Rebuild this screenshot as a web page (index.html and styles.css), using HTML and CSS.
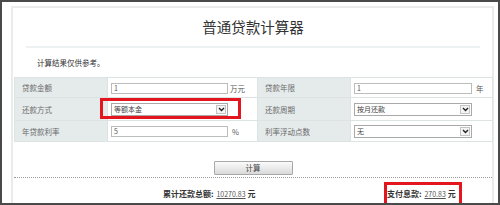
FILE: index.html
```html
<!DOCTYPE html>
<html lang="zh-CN">
<head>
<meta charset="utf-8">
<title>普通贷款计算器</title>
<link rel="stylesheet" href="styles.css">
</head>
<body>
<div class="frame">
  <div class="card">
    <h1 class="title">普通贷款计算器</h1>
    <div class="sep"></div>
    <p class="note">计算结果仅供参考。</p>
    <table class="form">
      <colgroup><col class="c-lab"><col class="c-v1"><col class="c-lab"><col class="c-v2"></colgroup>
      <tr class="r1">
        <th>贷款金额</th>
        <td><span class="inp">1</span><span class="unit u-wan">万元</span></td>
        <th>贷款年限</th>
        <td><span class="inp inp-r">1</span><span class="unit u-nian">年</span></td>
      </tr>
      <tr class="r2">
        <th>还款方式</th>
        <td><span class="sel"><span class="sel-text">等额本金</span><span class="arrow"><svg width="7" height="5" viewBox="0 0 7 5"><polyline points="1,1 3.5,3.5 6,1" fill="none" stroke="#222" stroke-width="1.4"/></svg></span></span></td>
        <th>还款周期</th>
        <td><span class="sel sel-r"><span class="sel-text">按月还款</span><span class="arrow"><svg width="7" height="5" viewBox="0 0 7 5"><polyline points="1,1 3.5,3.5 6,1" fill="none" stroke="#222" stroke-width="1.4"/></svg></span></span></td>
      </tr>
      <tr class="r3">
        <th>年贷款利率</th>
        <td><span class="inp">5</span><span class="unit u-pct">%</span></td>
        <th>利率浮动点数</th>
        <td><span class="sel sel-r"><span class="sel-text">无</span><span class="arrow"><svg width="7" height="5" viewBox="0 0 7 5"><polyline points="1,1 3.5,3.5 6,1" fill="none" stroke="#222" stroke-width="1.4"/></svg></span></span></td>
      </tr>
    </table>
    <div class="actions"><button class="btn" type="button">计算</button></div>
    <div class="results">
      <span class="res res-total">累计还款总额: <a class="num">10270.83</a>元</span>
      <span class="res">支付息款: <a class="num">270.83</a>元</span>
    </div>
    <div class="mark mark-1"></div>
    <div class="mark mark-2"></div>
  </div>
</div>
</body>
</html>
```
FILE: styles.css
```css
body {
  margin: 0;
}
.frame {
  width: 500px;
  height: 205px;
  box-sizing: border-box;
  border: 2px solid #4a4a4a;
  padding: 4px 4px 0 9px;
  overflow: hidden;
  background: #fff;
  font-family: "Noto Sans CJK SC", "Liberation Sans", sans-serif;
}
.card {
  position: relative;
  height: 100%;
  box-sizing: border-box;
  border: 2px solid #ebebeb;
  border-bottom: 0;
  padding-left: 1px;
}
.title {
  margin: 0;
  height: 38px;
  line-height: 38px;
  text-align: center;
  font-size: 14.5px;
  font-weight: normal;
  color: #333;
}
.sep {
  height: 2px;
  background: #edf1f1;
  margin: 0 12px;
}
.note {
  margin: 0;
  height: 29px;
  line-height: 30px;
  padding-left: 23px;
  font-size: 7.5px;
  color: #333;
}
.form {
  border-collapse: collapse;
  table-layout: fixed;
  width: 478px;
}
.c-lab { width: 93px; }
.c-v1 { width: 150px; }
.c-v2 { width: 142px; }
.form th,
.form td {
  border: 1px solid #dde2e2;
  vertical-align: middle;
  white-space: nowrap;
}
.form th {
  background: #e5ebeb;
  text-align: left;
  font-weight: normal;
  padding: 0 0 0 7px;
  color: #6a6a6a;
  font-size: 7.5px;
}
.form td {
  padding: 0 0 0 3px;
  font-size: 7.5px;
  color: #555;
}
.r1 { height: 20px; }
.r2 { height: 23px; }
.r3 { height: 21px; }
.inp {
  display: inline-block;
  vertical-align: middle;
  box-sizing: border-box;
  width: 117px;
  height: 11px;
  border: 1px solid #bcbcbc;
  padding-left: 2px;
  font-size: 7px;
  line-height: 9px;
  color: #555;
}
.inp-r { width: 118px; }
.unit {
  vertical-align: middle;
  color: #555;
}
.u-wan { margin-left: 2px; }
.u-pct { margin-left: 4px; }
.u-nian { margin-left: 4px; }
.sel {
  display: inline-flex;
  align-items: center;
  vertical-align: middle;
  box-sizing: border-box;
  width: 117px;
  height: 13px;
  border: 1px solid #a9a9a9;
  padding: 0 1px 0 2px;
  font-size: 7px;
  color: #444;
}
.sel-r { width: 118px; }
.sel-text {
  flex: 1;
  line-height: 11px;
}
.arrow {
  display: flex;
  align-items: center;
  justify-content: center;
  box-sizing: border-box;
  width: 10px;
  height: 9px;
  border: 1px solid #c4c4c4;
  background: #f4f4f4;
}
.actions {
  padding-top: 10px;
  text-align: center;
  height: 25px;
  box-sizing: content-box;
}
.btn {
  display: inline-block;
  width: 79px;
  height: 14px;
  padding: 0;
  border: 1px solid #a8a8a8;
  border-radius: 1px;
  background: linear-gradient(#fbfbfb, #dadada);
  font-family: inherit;
  font-size: 7.5px;
  color: #444;
  line-height: 12px;
}
.results {
  display: flex;
  border-top: 1px dotted #9a9a9a;
  padding-left: 149px;
  height: 32px;
  line-height: 32px;
  font-size: 8px;
  font-weight: bold;
  color: #333;
}
.res-total {
  width: 224px;
}
.num {
  font-weight: normal;
  font-size: 7px;
  color: #555;
  text-decoration: underline;
  margin: 0 2px 0 1px;
}
.mark {
  position: absolute;
  box-sizing: border-box;
  border: 3px solid #e3151f;
}
.mark-1 {
  left: 87px;
  top: 90px;
  width: 141px;
  height: 21px;
}
.mark-2 {
  left: 371px;
  top: 174px;
  width: 78px;
  height: 24px;
}
```
